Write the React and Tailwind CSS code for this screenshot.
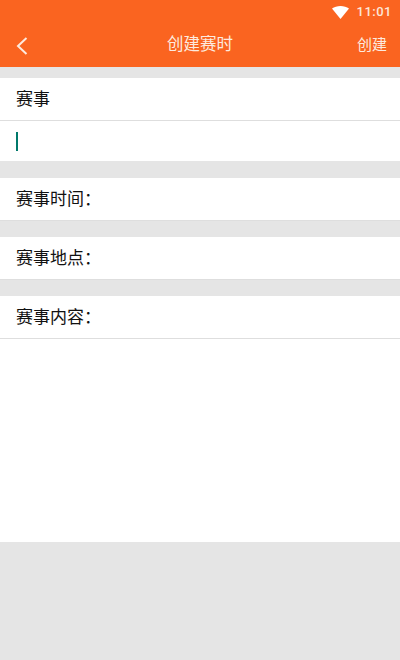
import React from 'react';

const sections = ['赛事时间：', '赛事地点：', '赛事内容：'];

function App() {
  return (
    <div className="w-[400px] h-[660px] flex flex-col bg-[#e5e5e5] font-['Roboto','Noto_Sans_CJK_SC',sans-serif] overflow-hidden">
      <div className="h-[67px] bg-[#fa6420] text-white flex flex-col shrink-0">
        <div className="h-[24px] flex items-center justify-end pr-2 gap-[8px]">
          <svg width="17" height="13" viewBox="0 0 17 13">
            <path d="M0 2.6C2.3.9 5.2 0 8.5 0S14.7.9 17 2.6L8.5 13z" fill="#fff" />
          </svg>
          <span className="text-[13px] font-medium tracking-[0.5px] text-[#fde6d8]">11:01</span>
        </div>
        <div className="flex-1 flex items-center pl-4 pr-[13px] text-[#fdeadf]">
          <div className="flex-1">
            <svg width="12" height="18" viewBox="0 0 12 18" fill="none" stroke="#fdeadf" strokeWidth="2">
              <path d="M10.5 1L2 9l8.5 8" />
            </svg>
          </div>
          <span className="text-[16.5px] mr-[3px]">创建赛时</span>
          <div className="flex-1 text-right text-[15px]">创建</div>
        </div>
      </div>
      <div className="h-[11px] shrink-0" />
      <div className="bg-white shrink-0">
        <div className="h-[43px] flex items-center px-4 pt-[1px] border-b border-[#dedede] text-[17px] text-[#111]">赛事</div>
        <div className="h-[40px] flex items-center px-4">
          <div className="w-[2px] h-[19px] bg-[#00796b]" />
        </div>
      </div>
      <div className="flex flex-col gap-[16px] pt-[17px] shrink-0">
        {sections.map((label) => (
          <div key={label} className="h-[43px] bg-white flex items-center px-4 pt-[2px] border-b border-[#dedede] text-[17px] text-[#111]">{label}</div>
        ))}
      </div>
      <div className="h-[203px] bg-white shrink-0" />
    </div>
  );
}

export default App;
